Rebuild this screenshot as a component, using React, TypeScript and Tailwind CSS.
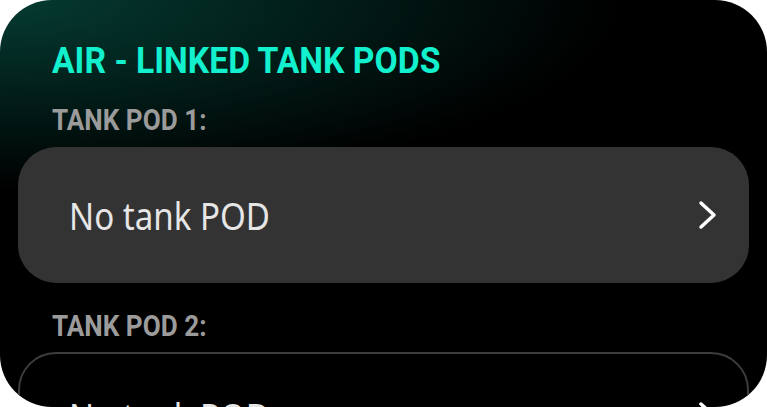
import React from "react";

function Chevron({ className }: { className?: string }) {
  return (
    <svg className={className} width="22" height="30" viewBox="0 0 22 30" fill="none">
      <path d="M4 3 L17 15 L4 27" stroke="white" strokeWidth="3.5" strokeLinecap="round" strokeLinejoin="round" />
    </svg>
  );
}

const head = { fontFamily: "Roboto, 'Noto Sans', sans-serif" };
const body = { fontFamily: "'Noto Sans', sans-serif" };

export default function App() {
  return (
    <div className="w-[767px] h-[407px] bg-white overflow-hidden">
      <div className="w-full h-full rounded-[52px] overflow-hidden bg-black bg-[radial-gradient(ellipse_620px_190px_at_0%_0%,#053b32_0%,#02211c_45%,#000000_100%)] px-[18px] pt-[39px]">
        <h1 className="pl-[34px] text-[37px] leading-[44px] font-bold text-[#12f0cd] whitespace-nowrap" style={head}>
          <span className="inline-block origin-left scale-x-[0.91]">AIR - LINKED TANK PODS</span>
        </h1>
        <div className="pl-[34px] mt-[20px] text-[29.5px] leading-[34px] font-bold text-[#9b9b9b] whitespace-nowrap" style={head}>
          <span className="inline-block origin-left scale-x-[0.885]">TANK POD 1:</span>
        </div>
        <div className="mt-[10px] h-[136px] rounded-[38px] bg-[#333333] flex items-center justify-between pl-[51px] pr-[30px]">
          <span className="inline-block origin-left scale-x-[0.87] text-[38px] text-[#e6e6e6] whitespace-nowrap" style={body}>No tank POD</span>
          <Chevron />
        </div>
        <div className="pl-[34px] mt-[26px] text-[29.5px] leading-[34px] font-bold text-[#9b9b9b] whitespace-nowrap" style={head}>
          <span className="inline-block origin-left scale-x-[0.885]">TANK POD 2:</span>
        </div>
        <div className="mt-[9px] h-[136px] rounded-[38px] border-2 border-[#3c3c3c] flex items-center justify-between pl-[49px] pr-[28px] pb-[8px]">
          <span className="inline-block origin-left scale-x-[0.87] text-[38px] text-[#e6e6e6] whitespace-nowrap" style={body}>No tank POD</span>
          <Chevron />
        </div>
      </div>
    </div>
  );
}
